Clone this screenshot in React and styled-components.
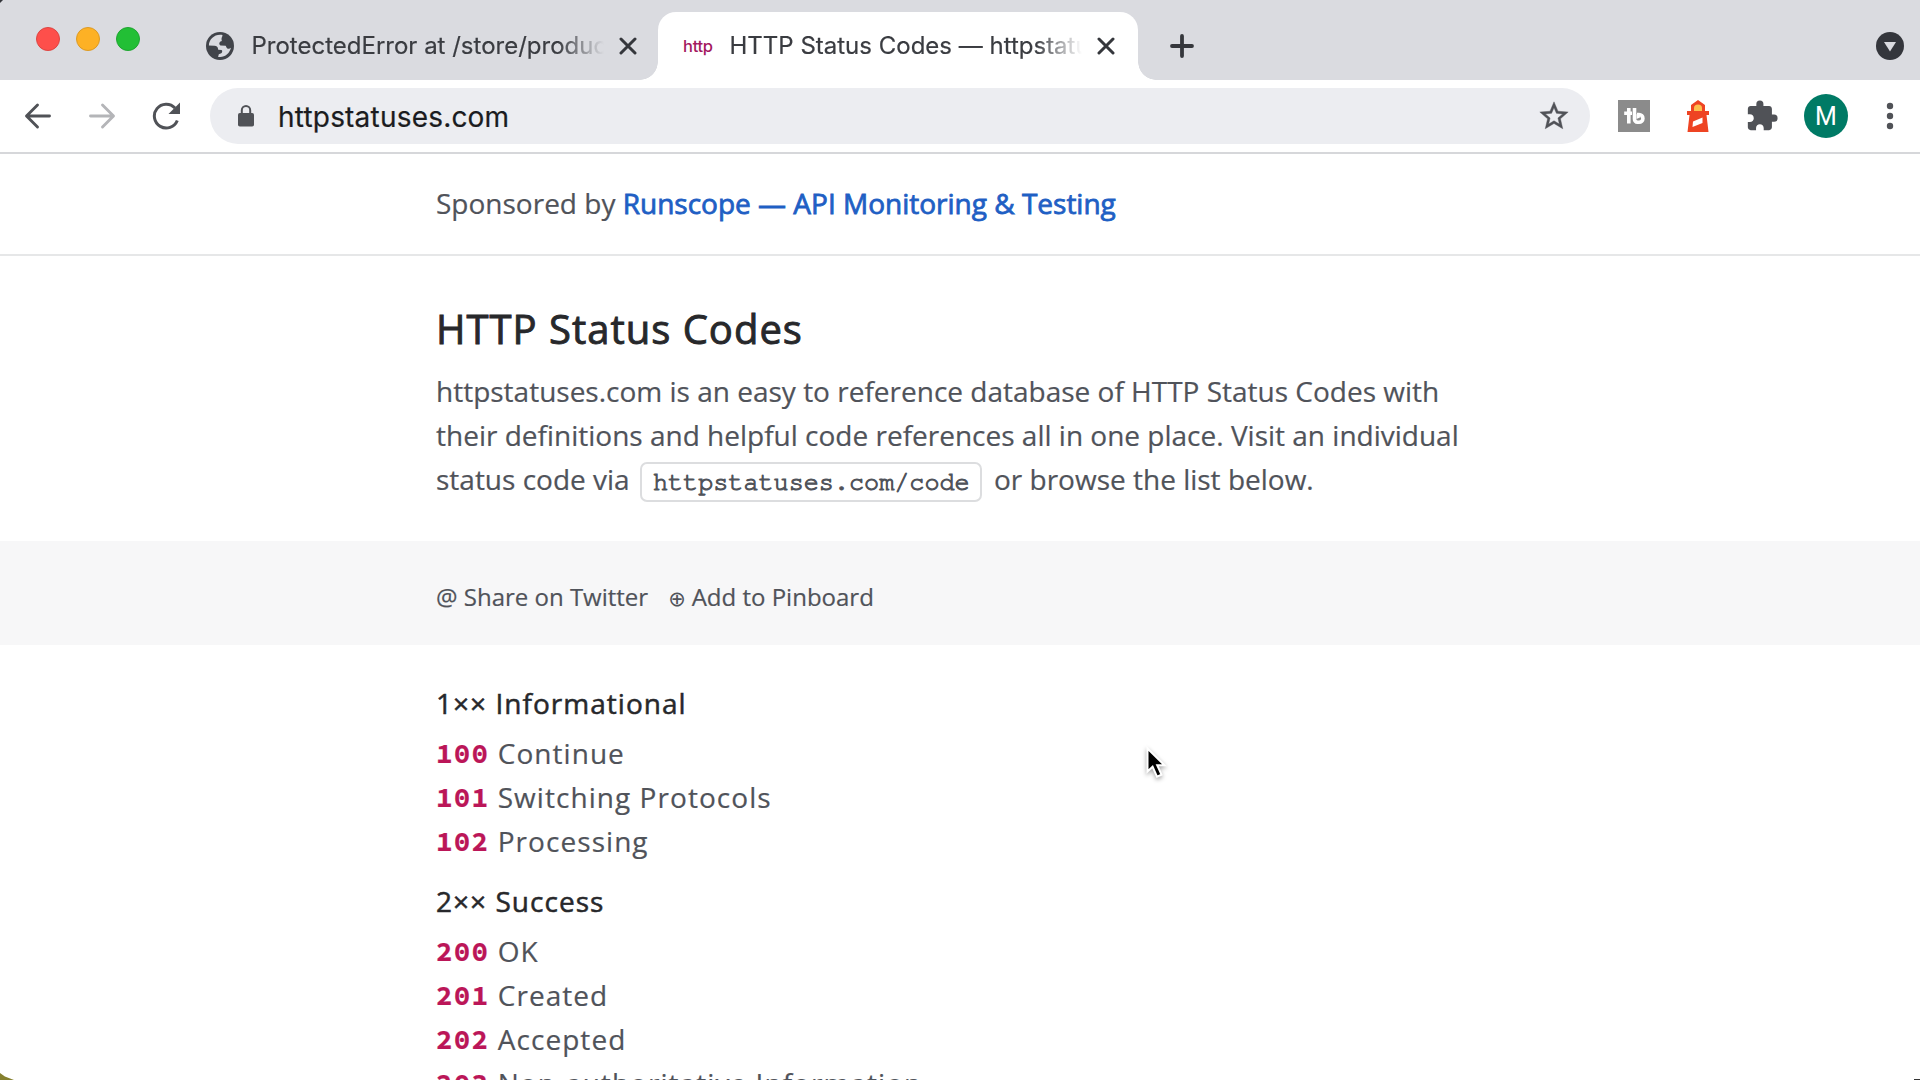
import React from "react";
import styled, { createGlobalStyle } from "styled-components";

const ui = `Inter, Roboto, "Liberation Sans", sans-serif`;
const body = `"Open Sans", "Noto Sans", sans-serif`;

const GlobalStyle = createGlobalStyle`
  * { box-sizing: border-box; }
  html, body { margin: 0; padding: 0; background: #fff; overflow: hidden; }
`;

const Window = styled.div`
  position: relative;
  display: flex;
  flex-direction: column;
  width: 1920px;
  height: 1080px;
  overflow: hidden;
  background: #fff;
`;

const TabStrip = styled.header`
  display: flex;
  align-items: flex-end;
  height: 80px;
  flex: none;
  padding-right: 16px;
  background: #dadbe0;
  font-family: ${ui};
`;

const Lights = styled.div`
  display: flex;
  gap: 16px;
  align-self: flex-start;
  width: 188px;
  padding: 27px 0 0 36px;
`;

const Light = styled.span`
  width: 24px;
  height: 24px;
  border-radius: 50%;
  background: ${(p) => p.$color};
  border: 1px solid ${(p) => p.$edge};
`;

const Tab = styled.div`
  position: relative;
  display: flex;
  align-items: center;
  height: 68px;
  width: ${(p) => p.$width}px;
  padding: 0 ${(p) => p.$right}px 0 ${(p) => p.$left}px;
  border-radius: 18px 18px 0 0;
  color: #3a3c41;
  background: ${(p) => (p.$active ? "#fff" : "transparent")};

  &::before,
  &::after {
    content: "";
    display: ${(p) => (p.$active ? "block" : "none")};
    position: absolute;
    bottom: 0;
    width: 18px;
    height: 18px;
  }
  &::before {
    left: -18px;
    background: radial-gradient(circle at 0 0, transparent 17.5px, #fff 18px);
  }
  &::after {
    right: -18px;
    background: radial-gradient(circle at 100% 0, transparent 17.5px, #fff 18px);
  }
`;

const TabTitle = styled.span`
  flex: 1;
  min-width: 0;
  margin: 0 15px 0 ${(p) => p.$gap}px;
  overflow: hidden;
  white-space: nowrap;
  font-size: 24px;
  line-height: 34px;
  -webkit-text-stroke: 0.2px currentColor;
  mask-image: linear-gradient(to right, #000 calc(100% - 46px), transparent);
`;

const Favicon = styled.span`
  width: 30px;
  flex: none;
  font-size: 16.5px;
  font-weight: 500;
  letter-spacing: -0.3px;
  color: #a3195f;
`;

const NewTab = styled.div`
  display: flex;
  align-items: center;
  height: 68px;
  margin-left: 30px;
`;

const TabSearch = styled.div`
  display: flex;
  align-items: center;
  height: 68px;
  margin-left: auto;
`;

const Toolbar = styled.div`
  display: flex;
  align-items: center;
  flex: none;
  height: 74px;
  padding-left: 24px;
  border-bottom: 2px solid #d6d7da;
  background: #fff;
  font-family: ${ui};
`;

const NavButtons = styled.nav`
  display: flex;
  flex: none;
  align-items: center;
  gap: 36px;
  width: 186px;
`;

const Omnibox = styled.div`
  display: flex;
  flex: none;
  align-items: center;
  width: 1380px;
  height: 56px;
  padding: 0 19px 0 27px;
  border-radius: 28px;
  background: #ecedf1;
`;

const Url = styled.span`
  flex: 1;
  margin-left: 23px;
  padding-top: 1px;
  font-size: 28px;
  letter-spacing: 0.2px;
  line-height: 40px;
  color: #1b1c20;
  -webkit-text-stroke: 0.2px currentColor;
`;

const Extensions = styled.div`
  display: flex;
  flex: none;
  margin-left: 12px;
`;

const IconButton = styled.div`
  display: flex;
  flex: none;
  align-items: center;
  justify-content: center;
  width: 64px;
  height: 56px;
`;

const Avatar = styled.div`
  display: flex;
  align-items: center;
  justify-content: center;
  width: 44px;
  height: 44px;
  border-radius: 50%;
  background: #007a65;
  color: #fff;
  font-family: Roboto, sans-serif;
  font-size: 25px;
`;

const Page = styled.main`
  flex: 1;
  min-height: 0;
  overflow: hidden;
  font-family: ${body};
  font-size: 28px;
  line-height: 44px;
  color: #50535a;
  -webkit-text-stroke: 0.2px currentColor;
`;

const Section = styled.section`
  padding: ${(p) => p.$pad};
  background: ${(p) => p.$bg || "transparent"};
`;

const Sponsor = styled(Section)`
  height: 102px;
  border-bottom: 2px solid #e6e7e8;
`;

const SponsorLink = styled.a`
  color: #1f5fc4;
  -webkit-text-stroke: 0.8px currentColor;
`;

const Title = styled.h1`
  margin: 0 0 12px;
  font-size: 40px;
  font-weight: 400;
  line-height: 56px;
  letter-spacing: 1px;
  color: #27282b;
  -webkit-text-stroke: 0.9px currentColor;
`;

const Intro = styled.p`
  width: 1048px;
  margin: 0;
`;

const Line = styled.span`
  display: block;
  height: 44px;
  white-space: nowrap;
`;

const Code = styled.code`
  display: inline-block;
  height: 40px;
  margin: 5px 5px -5px 3px;
  padding: 0 10px 0 11px;
  border: 2px solid #dcdddf;
  border-radius: 7px;
  vertical-align: top;
  font-family: FreeMono, "Liberation Mono", monospace;
  font-size: 25.15px;
  line-height: 37px;
  -webkit-text-stroke: 1px currentColor;
`;

const ShareBar = styled(Section)`
  display: flex;
  gap: 22px;
  height: 104px;
  font-size: 24px;
`;

const ShareLink = styled.a`
  display: flex;
  align-items: baseline;
  gap: ${(p) => p.$gap}px;
`;

const PlusMark = styled.span`
  width: 15px;
  font-family: "DejaVu Sans", sans-serif;
  font-size: 21px;
  text-indent: -2px;
  -webkit-text-stroke: 0;
`;

const Group = styled.div`
  margin-bottom: 16px;
  letter-spacing: 1.05px;
`;

const GroupTitle = styled.h2`
  margin: 0 0 6px;
  font-size: 28px;
  font-weight: 400;
  line-height: 44px;
  letter-spacing: 1.03px;
  color: #27282b;
  -webkit-text-stroke: 0.5px currentColor;
`;

const CodeList = styled.ul`
  margin: 0;
  padding: 0;
  list-style: none;
`;

const CodeItem = styled.li`
  display: flex;
  height: 44px;
  white-space: pre;
`;

const Num = styled.span`
  width: 53.4px;
  font-family: "Source Code Pro", "Liberation Mono", monospace;
  font-size: 27.5px;
  font-weight: 700;
  line-height: 46px;
  letter-spacing: 1.3px;
  color: #bb1658;
`;

const Pointer = styled.div`
  position: absolute;
  left: 1144px;
  top: 744px;
  filter: drop-shadow(0 2px 2px rgba(0, 0, 0, 0.35));
  line-height: 0;
`;

const Corner = styled.div`
  position: absolute;
  ${(p) => p.$place};
  width: ${(p) => p.$w}px;
  height: ${(p) => p.$h}px;
  background: ${(p) => p.$color};
  clip-path: ${(p) => p.$shape};
`;

const Close = () => (
  <svg width="18" height="18" viewBox="0 0 18 18" stroke="#35373c" strokeWidth="3" strokeLinecap="round">
    <path d="M2 2l14 14M16 2L2 16" />
  </svg>
);

const Globe = () => (
  <svg width="28" height="28" viewBox="0 0 28 28">
    <circle cx="14" cy="14" r="14" fill="#41444a" />
    <path
      fill="#dadbe0"
      d="M16.500 2.900C9 1.500 2.900 7 2.900 13.400L8.600 13.700C10.500 13.700 11.700 14.600 11.900 16.200L12.200 17.700L15.500 17.900C16.600 18.200 16.400 20.400 15.300 21.200L12.800 22.300L12.100 24.900C18.500 26 23.600 21.500 25 15.800C23.400 17.300 21.300 17.200 20.400 15.300L19.700 13.700L14.500 13.500C12.800 12.700 12.900 9.900 15.200 9.300L15.800 8.900L15.500 6.900C15.600 5 16.500 4.700 16.500 2.900Z"
    />
  </svg>
);

const Arrow = ({ color, flip }) => (
  <svg width="28" height="28" viewBox="0 0 28 28" fill="none" stroke={color} strokeWidth="2.9" strokeLinecap="round" strokeLinejoin="round">
    <path d={flip ? "M2.500 14H25M14.500 3L25.500 14L14.500 25" : "M25.500 14H3M13.500 3L2.500 14L13.500 25"} />
  </svg>
);

const Reload = () => (
  <svg width="30" height="30" viewBox="1 0 30 30">
    <path d="M26.300 19.500A11.900 11.900 0 1 1 24 7" fill="none" stroke="#505257" strokeWidth="3" />
    <path d="M29 1.500V13H17.500Z" fill="#505257" />
  </svg>
);

const Lock = () => (
  <svg width="18" height="24" viewBox="0 0 18 24">
    <rect x="1" y="9" width="16" height="13.500" rx="1.800" fill="#505257" />
    <path d="M4.800 10V6.200a4.200 4.200 0 0 1 8.400 0V10" fill="none" stroke="#505257" strokeWidth="2" />
  </svg>
);

const Star = () => (
  <svg width="34" height="34" viewBox="0 0 24 24" fill="#505257" stroke="#505257" strokeWidth="0.3">
    <path d="M22 9.240l-7.190-.62L12 2 9.190 8.630 2 9.240l5.460 4.730L5.820 21 12 17.270 18.180 21l-1.630-7.030L22 9.240zM12 15.400l-3.760 2.270 1-4.280-3.320-2.880 4.380-.38L12 6.100l1.710 4.040 4.380.38-3.320 2.880 1 4.280L12 15.400z" />
  </svg>
);

const TubeBuddy = () => (
  <svg width="32" height="32" viewBox="0 0 32 32">
    <rect width="32" height="32" fill="#8b8b8b" />
    <g fill="none" stroke="#fff" strokeWidth="3.600">
      <path d="M10.800 8V23.500M6.200 13.200H14" />
      <path d="M16.500 8V19" />
      <path d="M19 14.500H21A3.500 3.500 0 0 1 21 22.300H19.500A3.200 3.200 0 0 1 16.500 19" />
    </g>
    <path d="M18.500 14l4.500 3-4.500 2z" fill="#fff" />
  </svg>
);

const Lighthouse = () => (
  <svg width="24" height="32" viewBox="0 0 24 32">
    <path d="M12 0L19 5V11H23V15H20.500L22.500 32H1.500L3.500 15H1V11H5V5Z" fill="#ee4423" />
    <path d="M8 11V8a4 3.500 0 0 1 8 0V11Z" fill="#fdbf4d" />
    <path d="M7 21.500L16.500 17.500V23L6.500 27Z" fill="#fff" />
  </svg>
);

const Puzzle = () => (
  <svg width="34" height="34" viewBox="0 0 24 24" fill="#505257">
    <path d="M20.500 11H19V7c0-1.100-.9-2-2-2h-4V3.500a2.500 2.500 0 0 0-5 0V5H4c-1.100 0-1.990.9-1.990 2v3.800H3.500c1.490 0 2.700 1.210 2.700 2.700s-1.210 2.700-2.700 2.700H2V20c0 1.100.9 2 2 2h3.800v-1.500c0-1.490 1.210-2.700 2.700-2.700 1.490 0 2.700 1.210 2.700 2.700V22H17c1.100 0 2-.9 2-2v-4h1.500a2.500 2.500 0 0 0 0-5z" />
  </svg>
);

const Dots = () => (
  <svg width="8" height="28" viewBox="0 0 8 28" fill="#505257">
    <circle cx="4" cy="4" r="3.200" />
    <circle cx="4" cy="14" r="3.200" />
    <circle cx="4" cy="24" r="3.200" />
  </svg>
);

const groups = [
  {
    title: "1×× Informational",
    codes: [
      ["100", "Continue"],
      ["101", "Switching Protocols"],
      ["102", "Processing"],
    ],
  },
  {
    title: "2×× Success",
    codes: [
      ["200", "OK"],
      ["201", "Created"],
      ["202", "Accepted"],
      ["203", "Non-authoritative Information"],
    ],
  },
];

export default function App() {
  return (
    <Window>
      <GlobalStyle />
      <TabStrip>
        <Lights>
          <Light $color="#fe4f4b" $edge="#dd4542" />
          <Light $color="#fdb125" $edge="#dc9a24" />
          <Light $color="#22bf35" $edge="#1fa531" />
        </Lights>
        <Tab $width={470} $left={18} $right={21}>
          <Globe />
          <TabTitle $gap={17.5}>ProtectedError at /store/produc</TabTitle>
          <Close />
        </Tab>
        <Tab $active $width={480} $left={25} $right={23}>
          <Favicon>http</Favicon>
          <TabTitle $gap={16.5}>HTTP Status Codes — httpstatu</TabTitle>
          <Close />
        </Tab>
        <NewTab>
          <svg width="28" height="28" viewBox="0 0 28 28" stroke="#35373c" strokeWidth="3.800" strokeLinecap="round">
            <path d="M14 4V24M4 14H24" />
          </svg>
        </NewTab>
        <TabSearch>
          <svg width="28" height="28" viewBox="0 0 28 28">
            <circle cx="14" cy="14" r="14" fill="#34363c" />
            <path d="M8 10H20L14 19.500Z" fill="#dadbe0" />
          </svg>
        </TabSearch>
      </TabStrip>

      <Toolbar>
        <NavButtons>
          <Arrow color="#505257" />
          <Arrow color="#b4b5b8" flip />
          <Reload />
        </NavButtons>
        <Omnibox>
          <Lock />
          <Url>httpstatuses.com</Url>
          <Star />
        </Omnibox>
        <Extensions>
          <IconButton>
            <TubeBuddy />
          </IconButton>
          <IconButton>
            <Lighthouse />
          </IconButton>
          <IconButton>
            <Puzzle />
          </IconButton>
          <IconButton>
            <Avatar>M</Avatar>
          </IconButton>
          <IconButton>
            <Dots />
          </IconButton>
        </Extensions>
      </Toolbar>

      <Page>
        <Sponsor $pad="27px 0 0 436px">
          Sponsored by <SponsorLink>Runscope — API Monitoring &amp; Testing</SponsorLink>
        </Sponsor>
        <Section $pad="45px 0 40px 436px">
          <Title>HTTP Status Codes</Title>
          <Intro>
            <Line>httpstatuses.com is an easy to reference database of HTTP Status Codes with</Line>
            <Line>their definitions and helpful code references all in one place. Visit an individual</Line>
            <Line>
              status code via <Code>httpstatuses.com/code</Code> or browse the list below.
            </Line>
          </Intro>
        </Section>
        <ShareBar $bg="#f7f7f8" $pad="34px 0 0 436px">
          <ShareLink>@ Share on Twitter</ShareLink>
          <ShareLink $gap={6.5}>
            <PlusMark>⊕</PlusMark>
            <span>Add to Pinboard</span>
          </ShareLink>
        </ShareBar>
        <Section $pad="36px 0 0 436px">
          {groups.map((g) => (
            <Group key={g.title}>
              <GroupTitle>{g.title}</GroupTitle>
              <CodeList>
                {g.codes.map(([num, label]) => (
                  <CodeItem key={num}>
                    <Num>{num}</Num>
                    <span> {label}</span>
                  </CodeItem>
                ))}
              </CodeList>
            </Group>
          ))}
        </Section>
      </Page>

      <Pointer>
        <svg width="24" height="36" viewBox="0 0 24 36">
          <path
            d="M3.500 4.500V27.500L8.600 22.700L13 32.600L17.500 30.700L13.200 21.200H20.500Z"
            fill="#000"
            stroke="#fff"
            strokeWidth="2"
            strokeLinejoin="miter"
          />
        </svg>
      </Pointer>
      <Corner $place="left: 0; top: 0" $w={3} $h={3} $color="#33353a" $shape="polygon(0 0, 100% 0, 0 100%)" />
      <Corner $place="left: 0; bottom: 0" $w={14} $h={7} $color="#85802f" $shape="polygon(0 0, 35% 50%, 100% 100%, 0 100%)" />
      <Corner $place="right: 0; bottom: 0" $w={6} $h={1} $color="#333" $shape="none" />
    </Window>
  );
}
